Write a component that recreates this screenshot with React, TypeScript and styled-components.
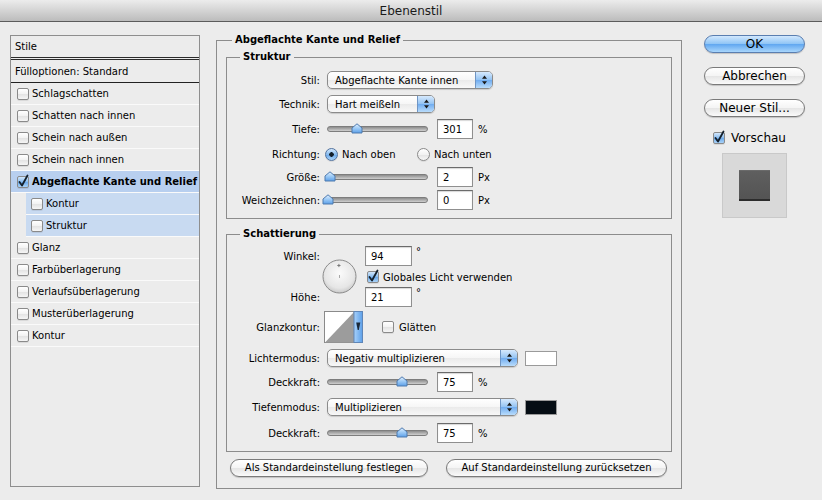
import styled, { createGlobalStyle } from 'styled-components'

const GlobalStyle = createGlobalStyle`
  html, body { margin: 0; padding: 0; }
  body {
    background: #ececec;
    font-family: "DejaVu Sans", "Lucida Grande", sans-serif;
    font-size: 10px;
    color: #000;
  }
  * { box-sizing: border-box; }
`

const Window = styled.div`
  width: 822px;
  height: 500px;
  background: #ececec;
  display: flex;
  flex-direction: column;
  overflow: hidden;
`

const TitleBar = styled.div`
  height: 22px;
  flex: none;
  display: flex;
  align-items: center;
  justify-content: center;
  font-size: 12px;
  color: #1a1a1a;
  background: linear-gradient(#ececec, #d4d4d4 50%, #bcbcbc);
  border-bottom: 1px solid #5c5c5c;
`

const Body = styled.div`
  display: flex;
  align-items: flex-start;
  padding: 11px 0 0 10px;
`

// ---- left list of styles
const StylesList = styled.div`
  width: 190px;
  height: 452px;
  margin-top: 2px;
  border: 1px solid #8e8e8e;
  display: flex;
  flex-direction: column;
`

const ListHead = styled.div`
  height: 24px;
  flex: none;
  padding-left: 4px;
  display: flex;
  align-items: center;
  border-bottom: 3px double #2b2b2b;
`

const BlendRow = styled.div`
  height: 23px;
  flex: none;
  padding-left: 4px;
  display: flex;
  align-items: center;
  border-bottom: 1px solid #222;
`

const StyleItem = styled.div<{ $sel?: boolean; $sub?: boolean }>`
  height: 22px;
  flex: none;
  display: flex;
  align-items: center;
  gap: 3px;
  padding-left: ${p => (p.$sub ? 5 : 6)}px;
  margin-left: ${p => (p.$sub ? 15 : 0)}px;
  border-bottom: 1px solid #fafafa;
  background: ${p => (p.$sub ? '#c8daf1' : p.$sel ? '#b8cfef' : 'transparent')};
  font-weight: ${p => (p.$sel ? 'bold' : 'normal')};
  white-space: nowrap;
`

// ---- checkbox / radio
const Box = styled.span<{ $on?: boolean }>`
  width: 12px;
  height: 12px;
  flex: none;
  border: 1px solid #8a8a8a;
  border-radius: 2px;
  background: ${p =>
    p.$on
      ? 'linear-gradient(#d3e7fc, #86bbef 50%, #6aa8ea 51%, #aad3f8)'
      : 'linear-gradient(#ffffff, #f2f2f2 50%, #e3e3e3 51%, #f5f5f5)'};
  display: inline-flex;
  align-items: center;
  justify-content: center;
  box-shadow: 0 1px 0 rgba(0, 0, 0, 0.08);
`

const CheckMark = styled.svg`
  overflow: visible;
`

function Check({ on }: { on?: boolean }) {
  return (
    <Box $on={on}>
      {on && (
        <CheckMark width="10" height="10" viewBox="0 0 10 10">
          <path d="M1.5 5 L4 8.5 L9.5 -1.5" fill="none" stroke="#14202c" strokeWidth="1.8" strokeLinecap="round" strokeLinejoin="round" />
        </CheckMark>
      )}
    </Box>
  )
}

const RadioDot = styled.span<{ $on?: boolean }>`
  width: 13px;
  height: 13px;
  flex: none;
  border-radius: 50%;
  border: 1px solid ${p => (p.$on ? '#52739f' : '#8a8a8a')};
  background: ${p =>
    p.$on
      ? 'radial-gradient(circle at 50% 50%, #14202c 0 2px, transparent 2.5px), linear-gradient(#d3e7fc, #86bbef 50%, #6aa8ea 51%, #aad3f8)'
      : 'linear-gradient(#ffffff, #f2f2f2 50%, #e3e3e3 51%, #f7f7f7)'};
  box-shadow: 0 1px 0 rgba(0, 0, 0, 0.08);
`

// ---- main group
const Group = styled.fieldset<{ $w?: number; $h?: number; $ml?: number; $mt?: number }>`
  margin: ${p => p.$mt ?? 0}px 0 0 ${p => p.$ml ?? 0}px;
  padding: 0;
  border: 1px solid #8c8c8c;
  min-width: 0;
  width: ${p => (p.$w ? `${p.$w}px` : 'auto')};
  height: ${p => (p.$h ? `${p.$h}px` : 'auto')};
`

const GroupTitle = styled.legend<{ $indent: number }>`
  margin-left: ${p => p.$indent}px;
  padding: 0 3px;
  font-weight: bold;
  font-size: 10px;
  line-height: 14px;
`

const GroupInner = styled.div`
  padding: 3px 9px 0;
`

const Rows = styled.div<{ $pt: number; $pb: number }>`
  padding: ${p => p.$pt}px 0 ${p => p.$pb}px;
`

const Row = styled.div<{ $h: number }>`
  height: ${p => p.$h}px;
  display: grid;
  grid-template-columns: 93px 1fr;
  column-gap: 7px;
  align-items: center;
`

const Label = styled.span`
  text-align: right;
  white-space: nowrap;
`

const Controls = styled.div`
  display: flex;
  align-items: center;
  white-space: nowrap;
`

// ---- popup select
const Popup = styled.div<{ $w: number }>`
  width: ${p => p.$w}px;
  height: 18px;
  flex: none;
  border: 1px solid #8b8b8b;
  border-radius: 5px;
  background: linear-gradient(#ffffff, #f6f6f6 50%, #eaeaea 51%, #f8f8f8);
  display: flex;
  align-items: center;
  overflow: hidden;
  box-shadow: 0 1px 1px rgba(0, 0, 0, 0.15);
`

const PopupText = styled.span`
  flex: 1;
  padding-left: 7px;
  white-space: nowrap;
`

const PopupArrows = styled.span`
  width: 17px;
  align-self: stretch;
  border-left: 1px solid #6f95c4;
  background: linear-gradient(#d6e9fd, #93c3f3 50%, #70acf0 51%, #b9dcfb);
  display: flex;
  align-items: center;
  justify-content: center;
`

function Select({ w, value }: { w: number; value: string }) {
  return (
    <Popup $w={w}>
      <PopupText>{value}</PopupText>
      <PopupArrows>
        <svg width="7" height="10" viewBox="0 0 7 10">
          <path d="M3.5 0.5 L6 3.8 H1Z M3.5 9.5 L6 6.2 H1Z" fill="#1a1a1a" />
        </svg>
      </PopupArrows>
    </Popup>
  )
}

// ---- slider
const Slider = styled.div`
  position: relative;
  width: 101px;
  height: 14px;
  flex: none;
`

const Track = styled.div`
  position: absolute;
  left: 0;
  right: 0;
  top: 4px;
  height: 6px;
  border-radius: 3px;
  border: 1px solid #7d7d7d;
  background: linear-gradient(#8d8d8d, #b4b4b4 60%, #cfcfcf);
`

const Thumb = styled.svg<{ $x: number }>`
  position: absolute;
  top: 1px;
  left: ${p => p.$x - 6}px;
`

function SliderCtl({ at }: { at: number }) {
  return (
    <Slider>
      <Track />
      <Thumb $x={at} width="12" height="11" viewBox="0 0 12 11">
        <defs>
          <linearGradient id={`th${at}`} x1="0" y1="0" x2="0" y2="1">
            <stop offset="0" stopColor="#e4f1fe" />
            <stop offset="0.5" stopColor="#9ccaf6" />
            <stop offset="1" stopColor="#5c9fe8" />
          </linearGradient>
        </defs>
        <path d="M1 5 L6 0.8 L11 5 V10 H1Z" fill={`url(#th${at})`} stroke="#4f7aae" strokeWidth="1" />
      </Thumb>
    </Slider>
  )
}

const Field = styled.input<{ $w: number; $ml?: number }>`
  width: ${p => p.$w}px;
  height: 20px;
  flex: none;
  margin: 0 0 0 ${p => p.$ml ?? 0}px;
  border: 1px solid #8f8f8f;
  border-top-color: #6b6b6b;
  box-shadow: inset 0 1px 1px rgba(0, 0, 0, 0.16);
  padding: 0 0 0 5px;
  font: inherit;
  font-size: 10px;
  background: #fff;
  outline: none;
  color: #000;
`

const Unit = styled.span<{ $sup?: boolean }>`
  margin-left: ${p => (p.$sup ? 4 : 5)}px;
  align-self: ${p => (p.$sup ? 'flex-start' : 'center')};
`

const Option = styled.label<{ $w?: number; $ml?: number }>`
  display: inline-flex;
  align-items: center;
  gap: 4px;
  width: ${p => (p.$w ? `${p.$w}px` : 'auto')};
  margin-left: ${p => p.$ml ?? 0}px;
`

// ---- shading block
const AngleBlock = styled.div`
  display: grid;
  grid-template-columns: 93px 45px auto;
  grid-template-rows: 24px 18px 22px;
  align-items: center;
`

const Dial = styled.svg`
  grid-column: 2;
  grid-row: 1 / 4;
  margin-left: 2px;
`

const AngleField = styled.div<{ $row: number }>`
  grid-column: 3;
  grid-row: ${p => p.$row};
  display: flex;
  align-items: center;
  height: 20px;
`

const Swatch = styled.span<{ $c: string }>`
  width: 32px;
  height: 15px;
  margin-left: 7px;
  border: 1px solid #9a9a9a;
  background: ${p => p.$c};
`

const Contour = styled.svg`
  margin-left: -3px;
`

// ---- buttons
const ButtonRow = styled.div`
  display: flex;
  gap: 18px;
  margin: 7px 0 0 4px;
`

const PushButton = styled.button<{ $w: number; $big?: boolean; $default?: boolean }>`
  width: ${p => p.$w}px;
  height: 18px;
  flex: none;
  border-radius: 9px;
  border: 1px solid ${p => (p.$default ? '#5a7eb0' : '#7a7a7a')};
  background: ${p =>
    p.$default
      ? 'linear-gradient(#d2e8fd, #8ec4f5 50%, #5fa6f0 51%, #a9d6fc)'
      : 'linear-gradient(#ffffff, #f4f4f4 50%, #e5e5e5 51%, #fafafa)'};
  box-shadow: 0 1px 1px rgba(0, 0, 0, 0.18);
  font-family: inherit;
  font-size: ${p => (p.$big ? 12 : 10)}px;
  line-height: 1;
  padding: 0;
  color: #000;
`

const Side = styled.div`
  margin: 2px 0 0 22px;
  width: 101px;
  display: flex;
  flex-direction: column;
  font-size: 12px;
`

const SideButton = styled(PushButton)`
  margin-bottom: 14px;
`

const PreviewToggle = styled.label`
  display: flex;
  align-items: center;
  gap: 6px;
  height: 14px;
  padding-left: 9px;
`

const Preview = styled.div`
  width: 65px;
  height: 65px;
  margin: 8px 0 0 18px;
  background: #d9d9d9;
  border: 1px solid #c9c9c9;
  display: flex;
  align-items: center;
  justify-content: center;
`

const PreviewChip = styled.div`
  width: 31px;
  height: 31px;
  background: linear-gradient(#5f5f5f, #545454);
  border-top: 1px solid #6a6a6a;
  border-bottom: 2px solid #2c2c2c;
`

const styleItems = [
  { name: 'Schlagschatten' },
  { name: 'Schatten nach innen' },
  { name: 'Schein nach außen' },
  { name: 'Schein nach innen' },
  { name: 'Abgeflachte Kante und Relief', on: true, sel: true },
  { name: 'Kontur', sub: true },
  { name: 'Struktur', sub: true },
  { name: 'Glanz' },
  { name: 'Farbüberlagerung' },
  { name: 'Verlaufsüberlagerung' },
  { name: 'Musterüberlagerung' },
  { name: 'Kontur' },
]

export default function App() {
  return (
    <Window>
      <GlobalStyle />
      <TitleBar>Ebenenstil</TitleBar>
      <Body>
        <StylesList>
          <ListHead>Stile</ListHead>
          <BlendRow>Fülloptionen: Standard</BlendRow>
          {styleItems.map((s, i) => (
            <StyleItem key={i} $sel={s.sel} $sub={s.sub}>
              <Check on={s.on} />
              {s.name}
            </StyleItem>
          ))}
        </StylesList>

        <Group $w={466} $h={456} $ml={16}>
          <GroupTitle $indent={15}>Abgeflachte Kante und Relief</GroupTitle>
          <GroupInner>
            <Group>
              <GroupTitle $indent={13}>Struktur</GroupTitle>
              <Rows $pt={4} $pb={6}>
                <Row $h={24}>
                  <Label>Stil:</Label>
                  <Controls><Select w={166} value="Abgeflachte Kante innen" /></Controls>
                </Row>
                <Row $h={24}>
                  <Label>Technik:</Label>
                  <Controls><Select w={108} value="Hart meißeln" /></Controls>
                </Row>
                <Row $h={26}>
                  <Label>Tiefe:</Label>
                  <Controls>
                    <SliderCtl at={30} />
                    <Field $w={36} $ml={9} readOnly value="301" />
                    <Unit>%</Unit>
                  </Controls>
                </Row>
                <Row $h={24}>
                  <Label>Richtung:</Label>
                  <Controls>
                    <Option $w={92} $ml={-2}><RadioDot $on />Nach oben</Option>
                    <Option><RadioDot />Nach unten</Option>
                  </Controls>
                </Row>
                <Row $h={22}>
                  <Label>Größe:</Label>
                  <Controls>
                    <SliderCtl at={3} />
                    <Field $w={36} $ml={9} readOnly value="2" />
                    <Unit>Px</Unit>
                  </Controls>
                </Row>
                <Row $h={24}>
                  <Label>Weichzeichnen:</Label>
                  <Controls>
                    <SliderCtl at={1} />
                    <Field $w={36} $ml={9} readOnly value="0" />
                    <Unit>Px</Unit>
                  </Controls>
                </Row>
              </Rows>
            </Group>

            <Group $mt={8}>
              <GroupTitle $indent={13}>Schattierung</GroupTitle>
              <Rows $pt={3} $pb={5}>
                <AngleBlock>
                  <Label>Winkel:</Label>
                  <Dial width="35" height="35" viewBox="0 0 35 35">
                    <defs>
                      <radialGradient id="dialg" cx="50%" cy="40%" r="60%">
                        <stop offset="0" stopColor="#fbfbfb" />
                        <stop offset="0.75" stopColor="#e6e6e6" />
                        <stop offset="1" stopColor="#c9c9c9" />
                      </radialGradient>
                    </defs>
                    <circle cx="17.5" cy="17.5" r="16.5" fill="url(#dialg)" stroke="#8a8a8a" />
                    <path d="M15.3 6.5 H18.5 M16.9 4.9 V8.1" stroke="#7a7a7a" strokeWidth="1" />
                    <line x1="17.5" y1="16" x2="17.5" y2="19" stroke="#a8a8a8" strokeWidth="1" />
                  </Dial>
                  <AngleField $row={1}>
                    <Field $w={47} readOnly value="94" />
                    <Unit $sup>°</Unit>
                  </AngleField>
                  <AngleField $row={2}>
                    <Option $ml={2}><Check on />Globales Licht verwenden</Option>
                  </AngleField>
                  <Label style={{ gridRow: 3, gridColumn: 1 }}>Höhe:</Label>
                  <AngleField $row={3}>
                    <Field $w={47} readOnly value="21" />
                    <Unit $sup>°</Unit>
                  </AngleField>
                </AngleBlock>

                <Row $h={34} style={{ marginTop: 2 }}>
                  <Label>Glanzkontur:</Label>
                  <Controls>
                    <Contour width="39" height="32" viewBox="0 0 39 32">
                      <defs>
                        <linearGradient id="cg" x1="0" y1="0" x2="1" y2="0">
                          <stop offset="0" stopColor="#a9d2fb" />
                          <stop offset="1" stopColor="#5c9fe8" />
                        </linearGradient>
                      </defs>
                      <rect x="0.5" y="0.5" width="29.5" height="31" fill="#fff" stroke="#8a8a8a" />
                      <polygon points="1,31.5 30,1 30,31.5" fill="#9c9c9c" />
                      <rect x="30" y="0.5" width="8.5" height="31" fill="url(#cg)" stroke="#5f86b8" />
                      <path d="M32.2 11.5 H36.3 L34.8 19 H33.7Z" fill="#1a2838" />
                    </Contour>
                    <Option $ml={19} style={{ gap: 5 }}><Check />Glätten</Option>
                  </Controls>
                </Row>
                <Row $h={24} style={{ marginTop: 2 }}>
                  <Label>Lichtermodus:</Label>
                  <Controls>
                    <Select w={191} value="Negativ multiplizieren" />
                    <Swatch $c="#ffffff" />
                  </Controls>
                </Row>
                <Row $h={24}>
                  <Label>Deckkraft:</Label>
                  <Controls>
                    <SliderCtl at={75} />
                    <Field $w={36} $ml={9} readOnly value="75" />
                    <Unit>%</Unit>
                  </Controls>
                </Row>
                <Row $h={26}>
                  <Label>Tiefenmodus:</Label>
                  <Controls>
                    <Select w={191} value="Multiplizieren" />
                    <Swatch $c="#050d14" />
                  </Controls>
                </Row>
                <Row $h={26}>
                  <Label>Deckkraft:</Label>
                  <Controls>
                    <SliderCtl at={75} />
                    <Field $w={36} $ml={9} readOnly value="75" />
                    <Unit>%</Unit>
                  </Controls>
                </Row>
              </Rows>
            </Group>

            <ButtonRow>
              <PushButton $w={198}>Als Standardeinstellung festlegen</PushButton>
              <PushButton $w={221}>Auf Standardeinstellung zurücksetzen</PushButton>
            </ButtonRow>
          </GroupInner>
        </Group>

        <Side>
          <SideButton $w={101} $big $default>OK</SideButton>
          <SideButton $w={101} $big>Abbrechen</SideButton>
          <SideButton $w={101} $big style={{ marginBottom: 14 }}>Neuer Stil...</SideButton>
          <PreviewToggle><Check on />Vorschau</PreviewToggle>
          <Preview>
            <PreviewChip />
          </Preview>
        </Side>
      </Body>
    </Window>
  )
}
